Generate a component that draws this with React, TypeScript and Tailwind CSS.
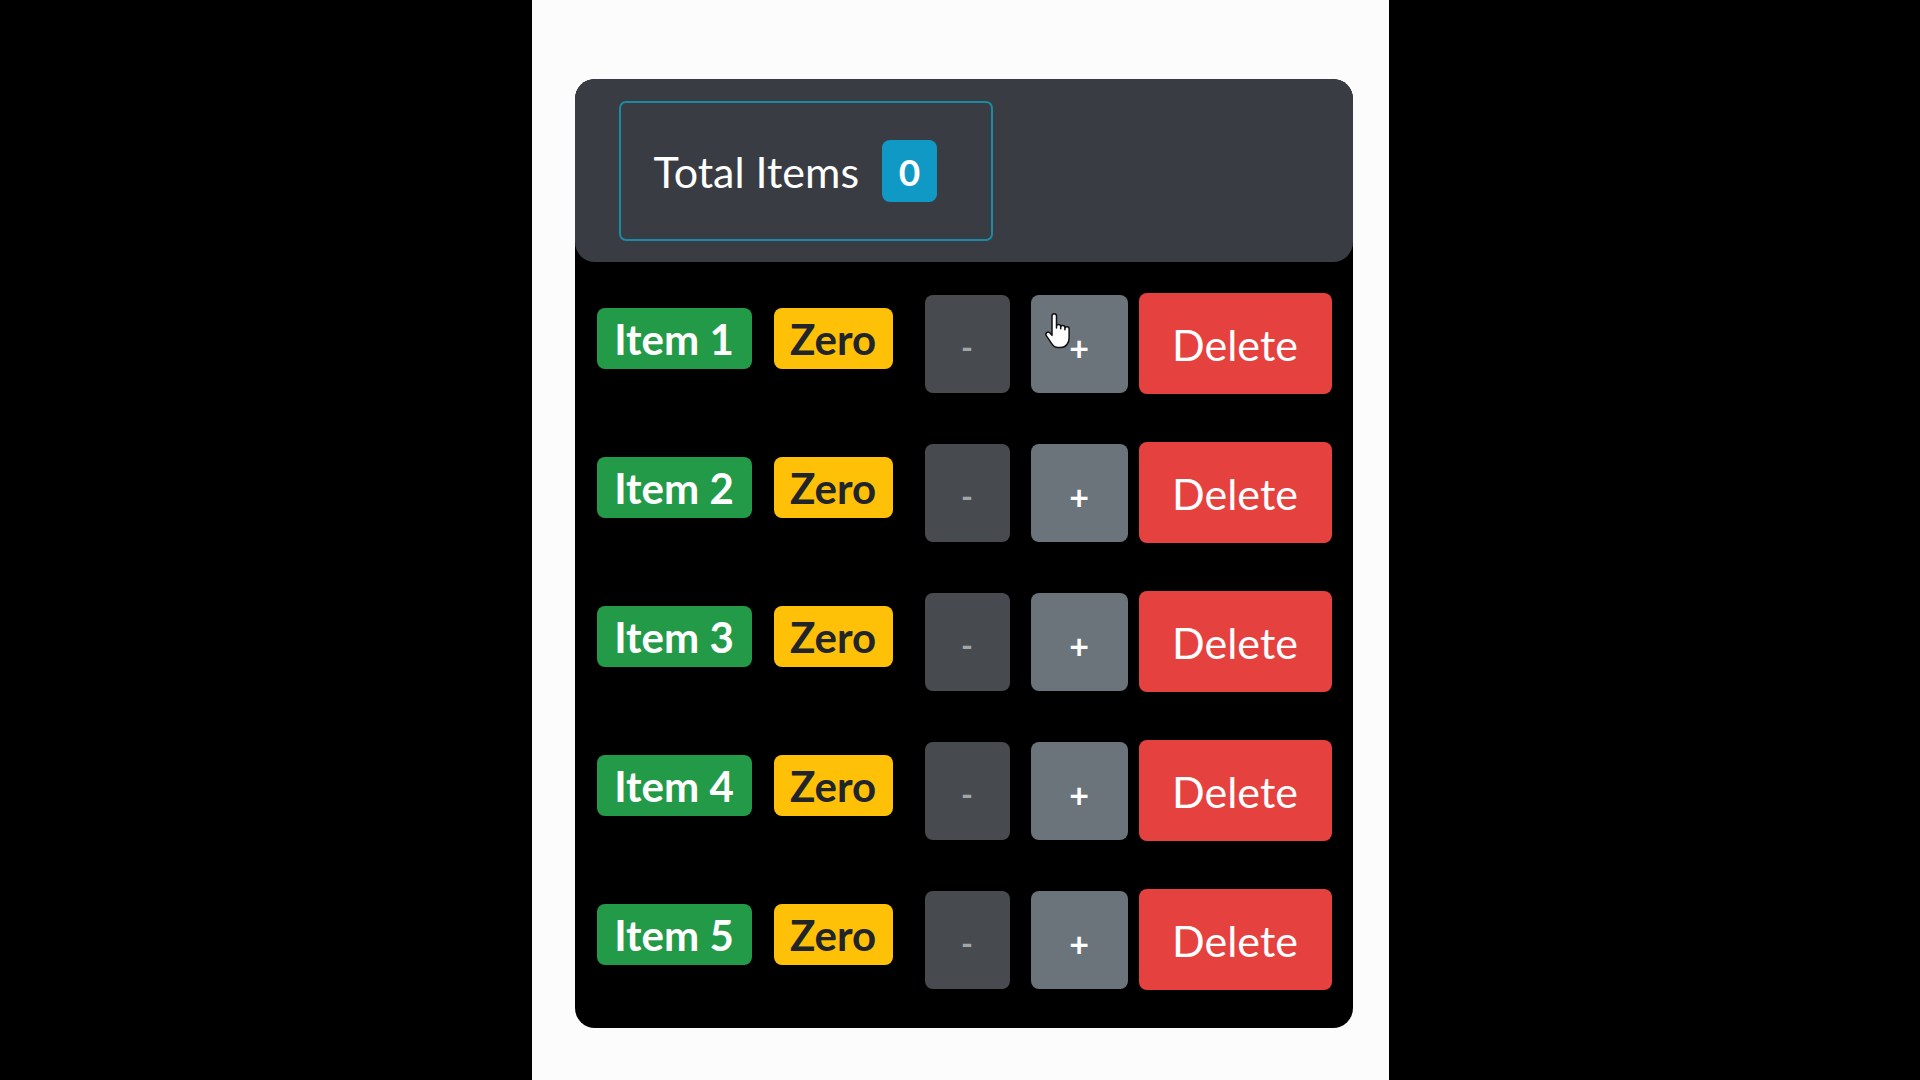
import React from "react"

// counter list (snapshot: every count at zero, so "-" is disabled)
const items = [1, 2, 3, 4, 5]

function HandCursor() {
  return (
    <svg
      viewBox="0 0 20 25"
      className="absolute left-[12px] top-[17px] w-[30px] h-[38px] pointer-events-none"
    >
      <path
        d="M6 2.5a1.5 1.5 0 0 1 3 0V10.5V9.6a1.4 1.4 0 0 1 2.8 0V11V10.2a1.4 1.4 0 0 1 2.8 0V11.6V11a1.4 1.4 0 0 1 2.8 0V17c0 3.4-2 6.5-5.4 6.5H10c-2 0-3.2-1-4.2-2.6L2.2 15.6a1.5 1.5 0 0 1 2.3-1.9L6 15.4Z"
        fill="#ffffff"
        stroke="#111111"
        strokeWidth="1"
        strokeLinejoin="round"
      />
    </svg>
  )
}

function Row({ n }: { n: number }) {
  return (
    <div className="flex items-start pl-[22px] h-[101px]">
      <span className="mt-[15px] w-[155px] h-[61px] rounded-[8px] bg-[#239a48] text-white font-bold text-[42px] leading-none flex items-center justify-center">
        Item {n}
      </span>
      <span className="mt-[15px] ml-[22px] w-[119px] h-[61px] rounded-[8px] bg-[#ffc107] text-[#212529] font-bold text-[42px] leading-none flex items-center justify-center">
        Zero
      </span>
      <button
        disabled
        className="mt-[2px] ml-[32px] w-[85px] h-[98px] rounded-[8px] bg-[#474b50] text-[#a3a6a9] font-bold text-[32px] leading-none flex items-center justify-center pt-[6px]"
      >
        -
      </button>
      <button className="relative mt-[2px] ml-[21px] w-[97px] h-[98px] rounded-[8px] bg-[#6b737b] text-white font-bold text-[34px] leading-none flex items-center justify-center pt-[8px]">
        +
        {n === 1 && <HandCursor />}
      </button>
      <button className="ml-[11px] w-[193px] h-[101px] rounded-[8px] bg-[#e5423f] text-white text-[43px] leading-none flex items-center justify-center pt-[2px]">
        Delete
      </button>
    </div>
  )
}

export default function App() {
  return (
    <div className="w-full h-[1080px] bg-black font-['Lato','Open_Sans',sans-serif] overflow-hidden">
      <div className="mx-auto w-[857px] h-full bg-[#fcfcfd] pt-[79px] pl-[43px]">
        <div className="w-[778px] h-[949px] rounded-[20px] bg-black">
          {/* header */}
          <div className="h-[183px] rounded-[20px] bg-[#393c42] pt-[22px] pl-[44px]">
            <div className="w-[374px] h-[140px] rounded-[7px] border-2 border-[#1a8ba3] flex items-center pl-[33px] gap-[23px]">
              <span className="text-white text-[43px] leading-none">Total Items</span>
              <span className="w-[55px] h-[62px] rounded-[8px] bg-[#1199c6] text-white font-bold text-[37px] leading-none flex items-center justify-center">
                0
              </span>
            </div>
          </div>

          {/* rows */}
          <div className="mt-[31px] flex flex-col gap-[48px]">
            {items.map((n) => (
              <Row key={n} n={n} />
            ))}
          </div>
        </div>
      </div>
    </div>
  )
}
